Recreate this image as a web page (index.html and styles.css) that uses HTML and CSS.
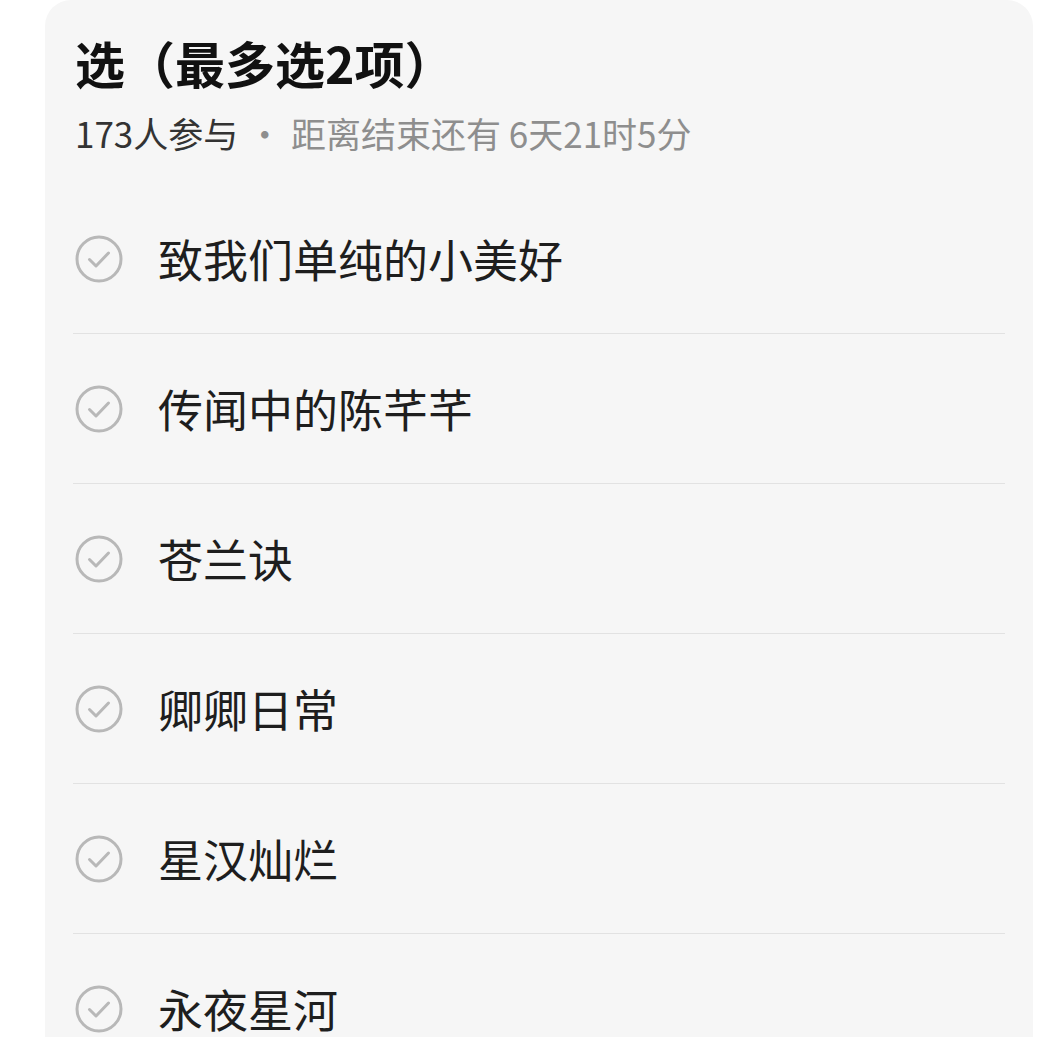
FILE: index.html
```html
<!DOCTYPE html>
<html lang="zh-CN">
<head>
    <meta charset="UTF-8">
    <meta name="viewport" content="width=device-width, initial-scale=1.0">
    <title>投票</title>
    <link rel="stylesheet" href="styles.css">
</head>
<body>
    <div class="card">
        <h1 class="title">选（最多选2项）</h1>
        <div class="meta">
            <span class="count">173人参与</span>
            <span class="dot">·</span>
            <span class="remain">距离结束还有 6天21时5分</span>
        </div>

        <ul class="options">
            <li class="option">
                <svg class="check" viewBox="0 0 48 48"><circle cx="24" cy="24" r="22" /><path d="M14.5 24.5 L21 31 L33.5 18" /></svg>
                <span class="label">致我们单纯的小美好</span>
            </li>
            <li class="option">
                <svg class="check" viewBox="0 0 48 48"><circle cx="24" cy="24" r="22" /><path d="M14.5 24.5 L21 31 L33.5 18" /></svg>
                <span class="label">传闻中的陈芊芊</span>
            </li>
            <li class="option">
                <svg class="check" viewBox="0 0 48 48"><circle cx="24" cy="24" r="22" /><path d="M14.5 24.5 L21 31 L33.5 18" /></svg>
                <span class="label">苍兰诀</span>
            </li>
            <li class="option">
                <svg class="check" viewBox="0 0 48 48"><circle cx="24" cy="24" r="22" /><path d="M14.5 24.5 L21 31 L33.5 18" /></svg>
                <span class="label">卿卿日常</span>
            </li>
            <li class="option">
                <svg class="check" viewBox="0 0 48 48"><circle cx="24" cy="24" r="22" /><path d="M14.5 24.5 L21 31 L33.5 18" /></svg>
                <span class="label">星汉灿烂</span>
            </li>
            <li class="option">
                <svg class="check" viewBox="0 0 48 48"><circle cx="24" cy="24" r="22" /><path d="M14.5 24.5 L21 31 L33.5 18" /></svg>
                <span class="label">永夜星河</span>
            </li>
        </ul>
    </div>
</body>
</html>
```

FILE: styles.css
```css
body {
    margin: 0;
    background-color: #fff;
    font-family: "Noto Sans CJK SC", "Noto Sans", sans-serif;
    overflow: hidden;
    height: 1037px;
}
.card {
    margin-left: 45px;
    width: 988px;
    box-sizing: border-box;
    padding: 32px 28px 0 30px;
    background-color: #f6f6f6;
    border-radius: 26px 26px 0 0;
    min-height: 1037px;
}
.title {
    margin: 0;
    font-size: 50px;
    font-weight: 700;
    line-height: 60px;
    color: #111;
}
.meta {
    margin-top: 19px;
    font-size: 35px;
    line-height: 44px;
    color: #8e8e8e;
}
.count {
    color: #333;
}
.dot {
    margin: 0 1px;
}
.options {
    list-style: none;
    margin: 29px 0 0 0;
    padding: 0;
}
.option {
    display: flex;
    align-items: center;
    height: 149px;
    border-bottom: 1px solid #e2e2e2;
    margin-left: -2px;
    padding-left: 2px;
}
.check {
    width: 48px;
    height: 48px;
    flex-shrink: 0;
    fill: none;
    stroke: #b8b8b8;
    stroke-width: 3;
    stroke-linecap: round;
    stroke-linejoin: round;
}
.label {
    margin-left: 35px;
    font-size: 45px;
    color: #1e1e1e;
}
```
